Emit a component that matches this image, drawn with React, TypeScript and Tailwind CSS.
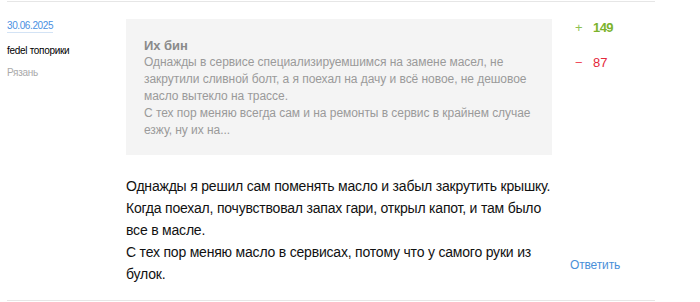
export default function App() {
  return (
    <div className="w-[700px] h-[302px] bg-white font-['Liberation_Sans',Arial,sans-serif]">
      <div className="ml-[7px] w-[648px] mt-px border-t border-b border-[#e6e6e6] flex pt-[17px] pb-[15px]">
        {/* author */}
        <div className="w-[119px] shrink-0 flex flex-col text-[10px] leading-[13px] tracking-[-0.3px]">
          <a className="self-start text-[#4a90e2] tracking-[-0.4px] border-b border-[#d3e3f5]" href="#">
            30.06.2025
          </a>
          <span className="mt-[11px] text-black">fedel топорики</span>
          <span className="mt-[9px] text-[#aaaaaa]">Рязань</span>
        </div>

        {/* body */}
        <div className="w-[426px] shrink-0">
          <div className="bg-[#f4f4f4] pl-[18px] pt-[18px] pb-[16px] text-[12px] leading-[17px] tracking-[-0.05px] text-[#9a9a9a] whitespace-nowrap">
            <div className="font-bold text-[#8a8a8a] text-[13px]">Их бин</div>
            <div>Однажды в сервисе специализируемшимся на замене масел, не</div>
            <div>закрутили сливной болт, а я поехал на дачу и всё новое, не дешовое</div>
            <div>масло вытекло на трассе.</div>
            <div>С тех пор меняю всегда сам и на ремонты в сервис в крайнем случае</div>
            <div>езжу, ну их на...</div>
          </div>
          <div className="mt-[20px] text-[14px] leading-[22px] tracking-[-0.2px] text-[#111] whitespace-nowrap">
            <div>Однажды я решил сам поменять масло и забыл закрутить крышку.</div>
            <div>Когда поехал, почувствовал запах гари, открыл капот, и там было</div>
            <div>все в масле.</div>
            <div>С тех пор меняю масло в сервисах, потому что у самого руки из</div>
            <div>булок.</div>
          </div>
        </div>

        {/* votes */}
        <div className="flex-1 flex flex-col justify-between pl-[18px]">
          <div className="mt-[1px] flex flex-col gap-[19px] pl-[5px] text-[13px] leading-[16px]">
            <div className="flex items-center">
              <span className="w-[18px] text-[#8cc152]">+</span>
              <span className="font-bold tracking-[-0.6px] text-[#7cb32c]">149</span>
            </div>
            <div className="flex items-center">
              <span className="w-[18px] text-[#ef4b5c]">−</span>
              <span className="text-[#e4283a]">87</span>
            </div>
          </div>
          <a className="mb-[12px] text-[12px] leading-[16px] tracking-[-0.15px] text-[#4a90d9]" href="#">
            Ответить
          </a>
        </div>
      </div>
    </div>
  );
}
